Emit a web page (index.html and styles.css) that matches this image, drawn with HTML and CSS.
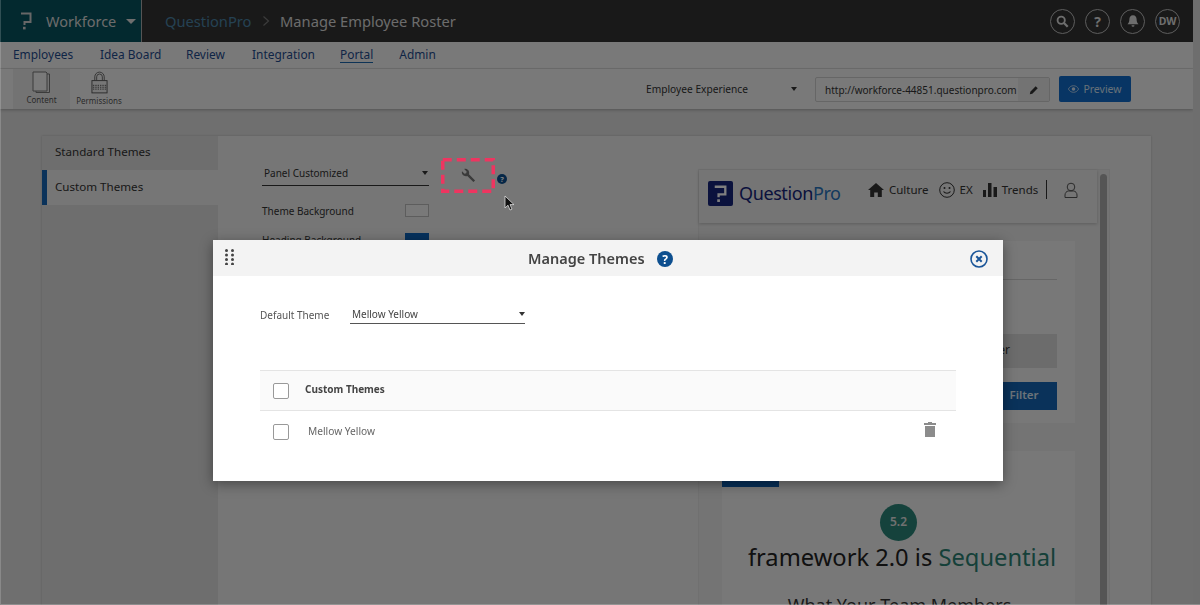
FILE: index.html
```html
<!DOCTYPE html>
<html lang="en">
<head>
<meta charset="utf-8">
<title>Manage Employee Roster</title>
<link rel="stylesheet" href="styles.css">
</head>
<body>
<div class="shell">
  <div class="app">
    <header class="topbar">
      <div class="brand">
        <svg class="brand-logo" viewBox="0 0 12 18"><path d="M1 1.500h9.500v8.500H4.500v3" fill="none" stroke="#cfcfcf" stroke-width="2"/><rect x="3" y="14.800" width="2.600" height="2.600" fill="#cfcfcf"/></svg>
        <span class="brand-name">Workforce</span>
        <span class="caret caret-lg"></span>
      </div>
      <div class="crumbs">
        <span class="crumb-root">QuestionPro</span>
        <svg class="crumb-sep" viewBox="0 0 8 12"><path d="M1.500 1.500 6.500 6l-5 4.500" fill="none" stroke="#777" stroke-width="1.200"/></svg>
        <span class="crumb-page">Manage Employee Roster</span>
      </div>
      <div class="top-actions">
        <span class="round"><svg viewBox="0 0 14 14" width="13" height="13"><circle cx="5.600" cy="5.600" r="3.900" fill="none" stroke="#ddd" stroke-width="2"/><path d="m8.600 8.600 4 4" stroke="#ddd" stroke-width="2.400"/></svg></span>
        <span class="round round-text">?</span>
        <span class="round"><svg viewBox="0 0 14 14" width="14" height="14"><path d="M7 1.200c-2.400 0-3.600 1.800-3.600 4 0 2.600-.7 3.800-1.900 5h11c-1.200-1.200-1.900-2.400-1.900-5 0-2.200-1.200-4-3.600-4zM5.500 11.200a1.500 1.500 0 0 0 3 0z" fill="#ddd"/></svg></span>
        <span class="round round-dw">DW</span>
      </div>
    </header>
    <nav class="mainnav">
      <a class="nav-item nav-w1">Employees</a>
      <a class="nav-item nav-w2">Idea Board</a>
      <a class="nav-item nav-w3">Review</a>
      <a class="nav-item nav-w4">Integration</a>
      <a class="nav-item nav-w5 active">Portal</a>
      <a class="nav-item">Admin</a>
    </nav>
    <div class="toolbar">
      <div class="tool tool-active">
        <svg viewBox="0 0 20 22" width="20" height="22"><path d="M1 1h13l1 1v18H1z" fill="#f5f5f5" stroke="#777" stroke-width="1"/><path d="M15 3h2.500v18.500H4V20" fill="none" stroke="#777" stroke-width="1"/></svg>
        <span>Content</span>
      </div>
      <div class="tool">
        <svg viewBox="0 0 18 24" width="17" height="23"><path d="M4 10V6a5 5 0 0 1 10 0v4M6 10V6a3 3 0 0 1 6 0v4" fill="none" stroke="#666" stroke-width="1"/><rect x="1" y="10" width="16" height="13" fill="#eee" stroke="#555"/><path d="M2 15h14M2 17h14M2 19h14" stroke="#555" stroke-width="1" stroke-dasharray="1.500 1"/></svg>
        <span>Permissions</span>
      </div>
      <div class="tool-spacer"></div>
      <div class="portal-select"><span>Employee Experience</span><span class="caret"></span></div>
      <div class="url-box">
        <span class="url-text">http://workforce-44851.questionpro.com</span>
        <span class="url-edit"><svg viewBox="0 0 12 12" width="10" height="10"><path d="M1 11l.6-3L8 1.500 10.500 4 4 10.400z" fill="#333"/></svg></span>
      </div>
      <button class="btn-preview"><svg viewBox="0 0 14 10" width="11" height="8"><path d="M.5 5C2 2 4.500.8 7 .8S12 2 13.500 5C12 8 9.500 9.200 7 9.200S2 8 .5 5z" fill="none" stroke="#cfe0f0" stroke-width="1"/><circle cx="7" cy="5" r="2.300" fill="#cfe0f0"/></svg>Preview</button>
    </div>
    <main class="content">
      <section class="card">
        <aside class="side">
          <div class="side-item">Standard Themes</div>
          <div class="side-item selected">Custom Themes</div>
        </aside>
        <div class="theme-form">
          <div class="form-top">
            <div class="underselect form-select"><span>Panel Customized</span><span class="caret"></span></div>
            <div class="tool-highlight">
              <svg class="dash-frame" viewBox="0 0 54 35" width="54" height="35"><rect x="1.750" y="1.750" width="50.500" height="31.500" fill="none" stroke="#ee3560" stroke-width="3.500" stroke-dasharray="9 5"/></svg>
              <svg viewBox="0 0 16 16" width="15" height="15"><path d="M15 13.200 8.500 6.700c.6-1.800.1-3.500-1-4.600C6.400 1 4.800.6 3.400 1.100L6 3.700 5.600 5.600 3.700 6 1.100 3.400c-.5 1.400-.1 3 1 4.100 1.100 1.100 2.800 1.600 4.600 1L13.200 15z" fill="#3a3a3a"/></svg>
            </div>
            <svg class="mini-help" viewBox="0 0 16 16" width="10" height="10"><circle cx="8" cy="8" r="8" fill="#0d4f8f"/><text x="8" y="12.500" text-anchor="middle" class="help-glyph">?</text></svg>
          </div>
          <div class="swatch-row"><span>Theme Background</span><i class="swatch swatch-light"></i></div>
          <div class="swatch-row"><span>Heading Background</span><i class="swatch swatch-blue"></i></div>
        </div>
        <div class="preview">
          <div class="preview-scroll">
            <div class="pv-head">
              <svg class="pv-logo" viewBox="0 0 26 26" width="25" height="25"><rect width="26" height="26" rx="2" fill="#16247a"/><path d="M7 6h11v8H11v3" fill="none" stroke="#fff" stroke-width="2.400"/><rect x="9.600" y="19" width="2.800" height="2.800" fill="#fff"/></svg>
              <span class="pv-word">Question<em>Pro</em></span>
              <div class="pv-links">
                <svg viewBox="0 0 16 14" width="16" height="14"><path d="M8 0 0 7h2.200v7h4V9.500h3.600V14h4V7H16z" fill="#333"/></svg><span>Culture</span>
                <svg class="gap" viewBox="0 0 16 16" width="16" height="16"><circle cx="8" cy="8" r="7.300" fill="none" stroke="#333"/><circle cx="5.500" cy="6" r="1" fill="#333"/><circle cx="10.500" cy="6" r="1" fill="#333"/><path d="M4.500 9.500c1.800 2.300 5.200 2.300 7 0" fill="none" stroke="#333" stroke-width="1.200"/></svg><span>EX</span>
                <svg class="gap" viewBox="0 0 14 14" width="14" height="14"><path d="M0 7h3v7H0zM5 0h3.500v14H5zM10.500 4H14v10h-3.500z" fill="#333"/></svg><span>Trends</span>
                <i class="pv-rule"></i>
                <svg class="pv-user" viewBox="0 0 14 16" width="14" height="16"><circle cx="7" cy="5" r="3.800" fill="none" stroke="#555"/><path d="M1 15.500v-2.500c0-2 1.500-4 3.500-4h5c2 0 3.500 2 3.500 4v2.500z" fill="none" stroke="#555"/></svg>
              </div>
            </div>
            <div class="pv-body">
              <div class="pv-filter">
                <div class="pv-filter-head"></div>
                <div class="pv-filter-input"><span>Filter</span></div>
                <button class="pv-filter-btn">Filter</button>
              </div>
              <div class="pv-article">
                <div class="pv-tab"></div>
                <div class="pv-badge">5.2</div>
                <h2>framework 2.0 is <em>Sequential</em></h2>
                <h3>What Your Team Members</h3>
              </div>
            </div>
          </div>
          <div class="pv-bar"><i></i></div>
        </div>
      </section>
    </main>
  </div>
  <div class="edge"></div>
</div>

<div class="backdrop"></div>
<svg class="cursor" viewBox="0 0 11 16" width="11" height="16"><path d="M1 1v12l3-2.800L6 15l2-.9-2-4.500h4z" fill="#111" stroke="#ddd" stroke-width=".8"/></svg>

<div class="modal">
  <div class="modal-head">
    <svg class="grip" viewBox="0 0 9 16" width="9" height="16"><g fill="#444"><circle cx="1.500" cy="1.500" r="1.500"/><circle cx="7.500" cy="1.500" r="1.500"/><circle cx="1.500" cy="6" r="1.500"/><circle cx="7.500" cy="6" r="1.500"/><circle cx="1.500" cy="10.500" r="1.500"/><circle cx="7.500" cy="10.500" r="1.500"/><circle cx="1.500" cy="15" r="1.500"/><circle cx="7.500" cy="15" r="1.500"/></g></svg>
    <div class="modal-title"><span>Manage Themes</span>
      <svg viewBox="0 0 16 16" width="16" height="16"><circle cx="8" cy="8" r="8" fill="#0d4f8f"/><text x="8" y="12.500" text-anchor="middle" class="help-glyph">?</text></svg>
    </div>
    <svg class="modal-close" viewBox="0 0 18 18" width="18" height="18"><circle cx="9" cy="9" r="8" fill="none" stroke="#1a5598" stroke-width="1.600"/><path d="m6.300 6.300 5.400 5.400m0-5.400-5.400 5.400" stroke="#1a5598" stroke-width="2"/></svg>
  </div>
  <div class="modal-body">
    <div class="default-row">
      <label>Default Theme</label>
      <div class="underselect modal-select"><span>Mellow Yellow</span><span class="caret"></span></div>
    </div>
    <div class="table">
      <div class="t-row t-head"><i class="check"></i><span>Custom Themes</span></div>
      <div class="t-row t-item"><i class="check"></i><span>Mellow Yellow</span>
        <svg class="trash" viewBox="0 0 12 15" width="12" height="15"><path d="M4 0h4v1h4v2H0V1h4zM1 4h10v11H1z" fill="#8c8c8c"/></svg>
      </div>
    </div>
  </div>
</div>
</body>
</html>
```
FILE: styles.css
```css
* { box-sizing: border-box; }
html, body { margin: 0; height: 605px; overflow: hidden; }
body { font-family: "Noto Sans", "Open Sans", sans-serif; color: #333; background: #dedede; }
em { font-style: normal; }
i { display: block; }
.shell { display: flex; height: 605px; }
.app { width: 1193px; height: 605px; overflow: hidden; flex: none; background: #dedede; }
.edge { flex: 1; background: #dcdcdc; }

.caret { width: 0; height: 0; border-left: 3.500px solid transparent; border-right: 3.500px solid transparent; border-top: 4px solid #333; display: block; }
.caret-lg { border-left-width: 5px; border-right-width: 5px; border-top: 5px solid #ddd; margin-left: 10px; }

.topbar { height: 42px; background: #333; display: flex; align-items: center; }
.brand { width: 142px; height: 42px; background: #07525e; border-right: 1px solid #aaa; display: flex; align-items: center; padding-left: 20px; }
.brand-logo { width: 12px; height: 18px; margin-right: 14px; flex: none; }
.brand-name { color: #d8d8d8; font-size: 14.500px; width: 70px; white-space: nowrap; }
.crumbs { display: flex; align-items: center; padding-left: 23px; font-size: 14.700px; white-space: nowrap; }
.crumb-root { color: #4a83a6; width: 88px; }
.crumb-sep { width: 8px; height: 12px; margin: 0 10px 0 9px; }
.crumb-page { color: #d8d8d8; }
.top-actions { margin-left: auto; display: flex; gap: 10px; padding-right: 13px; }
.round { width: 25px; height: 25px; border: 1px solid #bbb; border-radius: 50%; display: flex; align-items: center; justify-content: center; color: #ddd; font-weight: 700; }
.round-text { font-size: 14px; }
.round-dw { font-size: 10.500px; }

.mainnav { height: 27px; background: #f3f3f3; border-bottom: 1px solid #ddd; display: flex; align-items: center; padding: 0 0 2px 13px; font-size: 11.900px; color: #1e4a8c; }
.nav-item { white-space: nowrap; line-height: 16px; }
.nav-w1 { width: 87px; }
.nav-w2 { width: 86px; }
.nav-w3 { width: 66px; }
.nav-w4 { width: 88px; }
.nav-w5 { margin-right: 26px; }
.active { border-bottom: 1px solid #1b67ad; }

.toolbar { height: 40px; background: #f3f3f3; box-shadow: 0 1px 3px rgba(0,0,0,.25); display: flex; align-items: center; padding-left: 13px; position: relative; }
.tool { height: 40px; display: flex; flex-direction: column; align-items: center; justify-content: flex-start; padding-top: 2px; font-size: 8px; color: #555; white-space: nowrap; }
.tool span { margin-top: 2px; line-height: 10px; }
.tool-active { width: 57px; background: #e6e6e6; margin-right: 5px; }
.tool:not(.tool-active) { width: 48px; }
.tool-spacer { flex: 1; }
.portal-select { width: 151px; display: flex; justify-content: space-between; align-items: center; font-size: 10.200px; color: #333; white-space: nowrap; margin-right: 18px; }
.url-box { width: 235px; height: 25px; border: 1px solid #ccc; border-radius: 2px; display: flex; align-items: center; background: #f3f3f3; margin-right: 9px; margin-top: 1px; }
.url-text { font-size: 10px; padding-left: 9px; flex: 1; color: #333; white-space: nowrap; }
.url-edit { width: 31px; height: 23px; background: #e6e6e6; display: flex; align-items: center; justify-content: center; flex: none; }
.btn-preview { width: 72px; height: 26px; background: #106ac8; border: 0; border-radius: 2px; color: #cfe0f0; font: 10.500px "Noto Sans", sans-serif; display: flex; align-items: center; justify-content: center; gap: 4px; padding: 0; margin-right: 62px; }

.content { padding: 27px 42px 0; height: 497px; overflow: hidden; }
.card { width: 1109px; height: 600px; background: #ececec; display: flex; box-shadow: 0 0 2px rgba(0,0,0,.2); }
.side { width: 176px; background: #dcdcdc; font-size: 11.600px; color: #333; }
.side-item { height: 34px; line-height: 32px; padding-left: 13px; }
.side-item.selected { height: 35px; line-height: 33px; background: #ececec; border-left: 5px solid #1464b4; padding-left: 8px; }
.theme-form { width: 480px; padding: 22px 0 0 44px; font-size: 10px; color: #333; }
.form-top { display: flex; align-items: flex-start; height: 38px; }
.underselect { display: flex; justify-content: space-between; align-items: center; border-bottom: 1px solid #333; white-space: nowrap; }
.form-select { width: 167px; height: 28px; padding: 4px 1px 2px 2px; margin-top: 0; }
.tool-highlight { width: 54px; height: 35px; margin: 0 0 0 12px; display: flex; align-items: center; justify-content: center; position: relative; z-index: 2; flex: none; }
.dash-frame { position: absolute; left: 0; top: 0; }
.mini-help { margin: 16px 0 0 2px; display: block; }
.help-glyph { font: 700 12px "Noto Sans", sans-serif; fill: #fff; }
.swatch-row { width: 167px; height: 29px; display: flex; justify-content: space-between; align-items: center; }
.swatch { width: 24px; height: 13px; }
.swatch-light { border: 1px solid #bbb; background: #f2f2f2; }
.swatch-blue { background: #0d62b8; }

.preview { width: 412px; height: 600px; margin-top: 33px; background: #e8e8e8; display: flex; border: 1px solid #e0e0e0; }
.preview-scroll { width: 398px; }
.pv-bar { flex: 1; padding: 4px 2px 0 3px; }
.pv-bar i { width: 7px; height: 100%; background: #aaa; border-radius: 4px; }
.pv-head { height: 53px; background: #eaeaea; box-shadow: 0 1px 3px rgba(0,0,0,.2); display: flex; align-items: center; padding: 0 0 7px 9px; }
.pv-logo { flex: none; margin-right: 6px; }
.pv-word { font-size: 18px; color: #16247a; width: 122px; white-space: nowrap; letter-spacing: -.4px; }
.pv-word em { color: #2673bc; }
.pv-links { display: flex; align-items: center; font-size: 11.500px; color: #333; white-space: nowrap; margin: -7px 0 0 7px; }
.pv-links span { margin-left: 5px; }
.pv-links .gap { margin-left: 10px; }
.pv-rule { width: 1px; height: 19px; background: #333; margin: 0 17px 0 8px; }
.pv-body { padding: 18px 0 0 23px; }
.pv-filter { width: 353px; height: 182px; background: #f0f0f0; padding: 0 18px; overflow: hidden; }
.pv-filter-head { height: 39px; border-bottom: 1px solid #ccc; margin-bottom: 54px; }
.pv-filter-input { height: 34px; background: #d8d8d8; font-size: 12px; text-align: right; line-height: 32px; padding-right: 47px; margin-bottom: 14px; }
.pv-filter-btn { display: block; margin-left: auto; width: 70px; height: 28px; border: 0; background: #1464b4; color: #d8e6f2; font: 600 11.500px "Noto Sans", sans-serif; padding: 0 0 3px 4px; }
.pv-article { width: 353px; height: 300px; margin-top: 28px; background: #f0f0f0; text-align: center; overflow: hidden; }
.pv-tab { width: 57px; height: 36px; background: #0d5fb2; }
.pv-badge { width: 37px; height: 37px; border-radius: 50%; background: #2a8578; color: #e0e0e0; font-size: 12px; font-weight: 600; line-height: 36px; margin: 17px 0 0 158px; }
.pv-article h2 { margin: 0 0 0 7px; font-size: 23.700px; font-weight: 400; color: #222; line-height: 33px; white-space: nowrap; }
.pv-article h2 em { color: #2a8072; }
.pv-article h3 { margin: 18px 0 0 2px; font-size: 18px; line-height: 26px; font-weight: 400; color: #333; white-space: nowrap; }

.backdrop { position: fixed; inset: 0; z-index: 1; background: rgba(0,0,0,.5); border-left: 1px solid rgba(255,255,255,.18); border-bottom: 1px solid rgba(255,255,255,.22); }
.cursor { position: absolute; z-index: 3; left: 504px; top: 195px; }
.modal { position: absolute; z-index: 3; left: 213px; top: 240px; width: 790px; height: 241px; background: #fff; box-shadow: 0 3px 12px rgba(0,0,0,.4); }
.modal-head { height: 36px; background: #f3f3f3; display: flex; align-items: center; position: relative; padding: 0 15px 0 12px; justify-content: space-between; }
.grip { margin-top: -2px; }
.modal-title { position: absolute; left: 315px; top: 0; height: 35px; display: flex; align-items: center; gap: 13px; font-size: 14.500px; font-weight: 600; color: #444; white-space: nowrap; }
.modal-title svg { margin-top: 3px; margin-left: -1px; }
.modal-close { margin-top: 2px; }
.modal-body { padding: 24px 47px 0; }
.default-row { display: flex; align-items: center; height: 30px; font-size: 10px; color: #555; white-space: nowrap; }
.default-row label { width: 90px; }
.modal-select { width: 175px; height: 24px; padding: 5px 0 0 2px; color: #444; margin-top: -6px; border-bottom-color: #555; }
.table { margin-top: 40px; }
.t-row { display: flex; align-items: center; padding-left: 13px; white-space: nowrap; }
.t-head { height: 41px; background: #fafafa; border-top: 1px solid #e4e4e4; border-bottom: 1px solid #e4e4e4; font-size: 10px; font-weight: 700; color: #444; }
.t-head span { margin-top: -3px; }
.t-item { height: 42px; font-size: 10.200px; color: #666; }
.t-item span { margin-top: -2px; }
.check { width: 16px; height: 16px; border: 1px solid #999; border-radius: 2px; background: #fff; margin-right: 16px; flex: none; }
.t-item .check { margin-right: 19px; }
.trash { margin-left: auto; margin-right: 20px; margin-top: -6px; }
```
